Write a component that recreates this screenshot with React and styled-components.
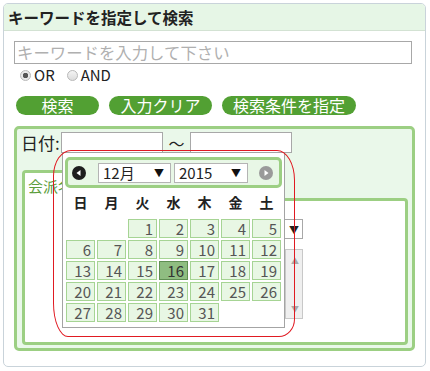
import React from 'react'
import styled, { createGlobalStyle } from 'styled-components'

const GlobalStyle = createGlobalStyle`
  html, body {
    margin: 0;
    padding: 0;
    background: #fff;
  }
  body {
    font-family: "Noto Sans CJK JP", "Liberation Sans", sans-serif;
    color: #222;
  }
`

const GREEN = '#9ccf83'

const Panel = styled.div`
  position: relative;
  margin: 3px 0 0 3px;
  width: 421px;
  height: 362px;
  border: 1px solid #c9d3da;
  border-radius: 5px;
  overflow: hidden;
`
const PanelHeader = styled.div`
  height: 26px;
  background: #e6f6e6;
  border-bottom: 1px solid #d3e2d3;
  padding-left: 4px;
  font-size: 15.5px;
  font-weight: bold;
  line-height: 26px;
  color: #222;
`
const PanelBody = styled.div`
  padding: 10px 13px 0 10px;
`
const KeywordInput = styled.div`
  box-sizing: border-box;
  width: 398px;
  height: 23px;
  border: 1px solid #a8a8a8;
  padding-left: 2px;
  font-size: 16.4px;
  line-height: 21px;
  color: #b0b0b0;
  white-space: nowrap;
`
const RadioRow = styled.div`
  display: flex;
  align-items: center;
  height: 20px;
  margin-top: 1px;
  padding-left: 6px;
  font-size: 15px;
`
const RadioDot = styled.span`
  box-sizing: border-box;
  width: 11px;
  height: 11px;
  border-radius: 50%;
  border: 1px solid #b8b8b8;
  background: ${({ checked }) =>
    checked
      ? 'radial-gradient(circle, #555 0 2.5px, #e8e8e8 3px)'
      : 'linear-gradient(#f4f4f4, #dcdcdc)'};
  margin-right: 3px;
`
const RadioLabel = styled.span`
  margin-right: 12px;
  line-height: 20px;
`
const ButtonRow = styled.div`
  display: flex;
  gap: 10px;
  margin-top: 11px;
  padding-left: 2px;
`
const PillButton = styled.div`
  width: ${({ w }) => w}px;
  height: 19px;
  border-radius: 10px;
  background: #52a033;
  color: #fff;
  font-size: 16px;
  line-height: 19px;
  text-align: center;
`
const DateBox = styled.div`
  box-sizing: border-box;
  margin-top: 11px;
  width: 401px;
  height: 225px;
  border: 3px solid ${GREEN};
  border-radius: 5px;
  background: #eaf8ea;
  padding: 3px 4px 0 4px;
`
const DateRow = styled.div`
  display: flex;
  align-items: center;
  height: 21px;
`
const DateLabel = styled.span`
  font-size: 17px;
  line-height: 21px;
  width: 40px;
`
const DateInput = styled.div`
  box-sizing: border-box;
  width: 102px;
  height: 21px;
  background: #fff;
  border: 1px solid #a8a8a8;
`
const Tilde = styled.span`
  width: 27px;
  text-align: center;
  font-size: 16px;
`
const Tab = styled.div`
  position: relative;
  z-index: 1;
  box-sizing: border-box;
  margin: 17px 0 -3px 1px;
  width: 120px;
  height: 31px;
  border: 3px solid ${GREEN};
  border-bottom: none;
  border-radius: 4px 4px 0 0;
  background: #fff;
  padding: 3px 0 0 3px;
  font-size: 15px;
  line-height: 20px;
  color: #5c9e3c;
`
const TabPanel = styled.div`
  box-sizing: border-box;
  margin-left: 1px;
  width: 386px;
  height: 147px;
  border: 3px solid ${GREEN};
  border-radius: 0 4px 4px 4px;
  background: #fff;
  padding: 18px 0 0 125px;
`
const FakeSelect = styled.div`
  box-sizing: border-box;
  width: 153px;
  height: 20px;
  border: 1px solid #a8a8a8;
  display: flex;
  justify-content: flex-end;
  align-items: center;
  padding-right: 3px;
  font-size: 10px;
`
const ListBox = styled.div`
  box-sizing: border-box;
  margin-top: 10px;
  width: 153px;
  height: 70px;
  display: flex;
  justify-content: flex-end;
`
const ScrollBar = styled.div`
  box-sizing: border-box;
  width: 18px;
  height: 100%;
  background: #efefef;
  border: 1px solid #c8c8c8;
  display: flex;
  flex-direction: column;
  justify-content: space-between;
  align-items: flex-end;
  padding: 5px 3px 4px 0;
  font-size: 8px;
  color: #a8a8a8;
`

/* calendar popup */
const Picker = styled.div`
  position: absolute;
  left: 58px;
  top: 148px;
  z-index: 5;
  box-sizing: border-box;
  width: 223px;
  height: 176px;
  background: #fff;
  border: 1px solid #a4a4a4;
  padding: 4px 2px 0 2px;
`
const PickerHead = styled.div`
  box-sizing: border-box;
  height: 31px;
  border: 3px solid ${GREEN};
  border-radius: 5px;
  background: #e8f7e6;
  display: flex;
  align-items: center;
  padding-left: 4px;
`
const NavIcon = styled.svg`
  width: 14px;
  height: 14px;
  flex: none;
  margin-left: ${({ ml }) => ml || 0}px;
`
const SelectBox = styled.div`
  box-sizing: border-box;
  width: ${({ w }) => w}px;
  height: 20px;
  background: #fff;
  border: 1px solid #b4b4b4;
  display: flex;
  align-items: center;
  justify-content: space-between;
  padding: 0 6px 0 4px;
  font-size: 15px;
  line-height: 18px;
  margin-left: ${({ ml }) => ml}px;
`
const Caret = styled.span`
  font-size: 10px;
  color: #111;
`
const Grid = styled.div`
  display: grid;
  grid-template-columns: repeat(7, 29px);
  column-gap: 2px;
  row-gap: 2px;
  padding-left: 1px;
`
const DayName = styled.div`
  height: 29px;
  font-size: 14px;
  font-weight: bold;
  line-height: 29px;
  text-align: center;
  color: #222;
`
const Cell = styled.div`
  box-sizing: border-box;
  height: 19px;
  border: 1px solid ${({ active }) => (active ? '#5f8f52' : '#a6d494')};
  background: ${({ active }) => (active ? '#8fbd81' : '#e8f7e4')};
  color: ${({ active }) => (active ? '#333' : '#555')};
  text-align: right;
  padding-right: 3px;
  font-size: 15px;
  line-height: 17px;
`
const Blank = styled.div`
  height: 19px;
`
const Annotation = styled.div`
  position: absolute;
  z-index: 6;
  left: 49px;
  top: 146px;
  width: 240px;
  height: 185px;
  border: 1px solid #e01a22;
  border-radius: 18px 18px 16px 15px / 26px 30px 18px 34px;
  pointer-events: none;
`

const PrevIcon = () => (
  <NavIcon viewBox="0 0 14 14">
    <circle cx="7" cy="7" r="7" fill="#1e1e1e" />
    <path d="M4.5 7 L8.5 4 L8.5 10 Z" fill="#fff" />
  </NavIcon>
)
const NextIcon = () => (
  <NavIcon viewBox="0 0 14 14" ml={11}>
    <circle cx="7" cy="7" r="7" fill="#9a9a9a" />
    <path d="M9.5 7 L5.5 4 L5.5 10 Z" fill="#fff" />
  </NavIcon>
)

const DAYS = ['日', '月', '火', '水', '木', '金', '土']

const Calendar = () => {
  const cells = []
  for (let i = 0; i < 2; i++) cells.push(<Blank key={'b' + i} />)
  for (let d = 1; d <= 31; d++) {
    cells.push(
      <Cell key={d} active={d === 16}>
        {d}
      </Cell>
    )
  }
  return (
    <Picker>
      <PickerHead>
        <PrevIcon />
        <SelectBox w={73} ml={12}>
          <span>12月</span>
          <Caret>▼</Caret>
        </SelectBox>
        <SelectBox w={74} ml={3}>
          <span>2015</span>
          <Caret>▼</Caret>
        </SelectBox>
        <NextIcon />
      </PickerHead>
      <Grid>
        {DAYS.map(d => (
          <DayName key={d}>{d}</DayName>
        ))}
        {cells}
      </Grid>
    </Picker>
  )
}

export default function App() {
  return (
    <>
      <GlobalStyle />
      <Panel>
        <PanelHeader>キーワードを指定して検索</PanelHeader>
        <PanelBody>
          <KeywordInput>キーワードを入力して下さい</KeywordInput>
          <RadioRow>
            <RadioDot checked />
            <RadioLabel>OR</RadioLabel>
            <RadioDot />
            <RadioLabel>AND</RadioLabel>
          </RadioRow>
          <ButtonRow>
            <PillButton w={83}>検索</PillButton>
            <PillButton w={103}>入力クリア</PillButton>
            <PillButton w={134}>検索条件を指定</PillButton>
          </ButtonRow>
          <DateBox>
            <DateRow>
              <DateLabel>日付:</DateLabel>
              <DateInput />
              <Tilde>～</Tilde>
              <DateInput />
            </DateRow>
            <Tab>会派名</Tab>
            <TabPanel>
              <FakeSelect>▼</FakeSelect>
              <ListBox>
                <ScrollBar>
                  <span>▲</span>
                  <span>▼</span>
                </ScrollBar>
              </ListBox>
            </TabPanel>
          </DateBox>
        </PanelBody>
        <Calendar />
        <Annotation />
      </Panel>
    </>
  )
}
